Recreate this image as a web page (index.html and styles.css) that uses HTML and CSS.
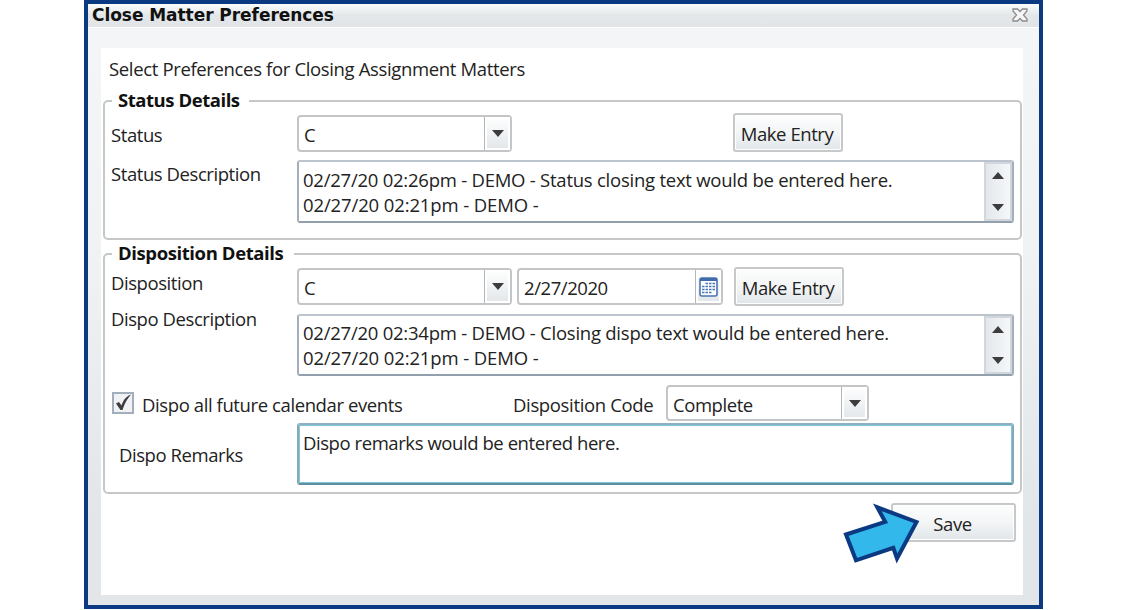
FILE: index.html
```html
<!DOCTYPE html>
<html lang="en">
<head>
	<meta charset="UTF-8">
	<title>Close Matter Preferences</title>
	<link rel="stylesheet" href="styles.css">
</head>
<body>
	<div class="window">
		<div class="title-bar">
			<h1>Close Matter Preferences</h1>
			<svg class="close" width="16" height="14" viewBox="0 0 16 14">
				<path d="M1 1h4.500l2.500 2.500 2.500-2.500H15v2l-3.500 4 3.500 4v2h-4.500l-2.500-2.500-2.500 2.500H1v-2l3.500-4L1 3z" fill="#f6f6f6" stroke="#8c8c8c" stroke-width="1.300"/>
			</svg>
		</div>
		<div class="panel">
			<p class="intro">Select Preferences for Closing Assignment Matters</p>

			<fieldset class="group status">
				<legend>Status Details</legend>
				<div class="row">
					<span class="label">Status</span>
					<div class="combo"><span class="value">C</span><span class="drop"><i class="down"></i></span></div>
					<button class="btn entry">Make Entry</button>
				</div>
				<div class="row">
					<span class="label desc">Status Description</span>
					<div class="memo">
						<p class="lines"><span class="entry-line">02/27/20 02:26pm - DEMO - Status closing text would be entered here.</span><br><span class="entry-line short">02/27/20 02:21pm - DEMO -</span></p>
						<div class="scroll"><i class="up"></i><i class="down"></i></div>
					</div>
				</div>
			</fieldset>

			<fieldset class="group dispo">
				<legend>Disposition Details</legend>
				<div class="row">
					<span class="label">Disposition</span>
					<div class="combo"><span class="value">C</span><span class="drop"><i class="down"></i></span></div>
					<div class="combo date">
						<span class="value">2/27/2020</span>
						<span class="drop">
							<svg width="19" height="20" viewBox="0 0 19 20">
								<rect x="1" y="1" width="17" height="18" rx="2" fill="#fff" stroke="#4a76b2" stroke-width="1.600"/>
								<path d="M1 2.500h17" stroke="#3f6cab" stroke-width="3"/>
								<path d="M6.500 6.500h9.500M3 9.500h13M3 12.500h13M3 15.500h9.500" stroke="#4a76b2" stroke-width="1.600" stroke-dasharray="2.500 1"/>
							</svg>
						</span>
					</div>
					<button class="btn entry">Make Entry</button>
				</div>
				<div class="row">
					<span class="label desc">Dispo Description</span>
					<div class="memo">
						<p class="lines"><span class="entry-line">02/27/20 02:34pm - DEMO - Closing dispo text would be entered here.</span><br><span class="entry-line short">02/27/20 02:21pm - DEMO -</span></p>
						<div class="scroll"><i class="up"></i><i class="down"></i></div>
					</div>
				</div>
				<div class="row options">
					<span class="check">
						<svg width="18" height="18" viewBox="0 0 18 18">
							<path d="M2 9.500l3-1.500 2.500 3.500C9 7 11.500 2.500 17 .5 13 5 10.500 9.500 8.500 16H6.500z" fill="#3c3c3c"/>
						</svg>
					</span>
					<span class="check-text">Dispo all future calendar events</span>
					<span class="code-text">Disposition Code</span>
					<div class="combo code"><span class="value">Complete</span><span class="drop"><i class="down"></i></span></div>
				</div>
				<div class="row">
					<span class="label remarks">Dispo Remarks</span>
					<div class="memo focused">
						<p class="lines">Dispo remarks would be entered here.</p>
					</div>
				</div>
			</fieldset>

			<div class="actions">
				<button class="btn save">Save</button>
			</div>
		</div>
		<svg class="arrow" width="80" height="64" viewBox="0 0 80 64">
			<path d="M6 34.500L45.200 21.800 37.300 7.300 76.500 22 57 58.500 53.300 47.800 16 60.300z" fill="#33b8ec" stroke="#0c3a82" stroke-width="4"/>
		</svg>
	</div>
</body>
</html>
```
FILE: styles.css
```css
*{
	box-sizing: border-box;
}
body{
	margin: 0;
	background-color: #fff;
	color: #222;
	font-family: "Open Sans", "Noto Sans", sans-serif;
	font-size: 18.5px;
	letter-spacing: -.43px;
	line-height: 24px;
}
p, h1{
	margin: 0;
}
.window{
	position: relative;
	width: 959px;
	height: 609px;
	margin-left: 84px;
	border: 4px solid #0c3a82;
	background: linear-gradient(#f5f6f8, #eff1f2 45%, #e2e6e9 85%);
}
.title-bar{
	display: flex;
	justify-content: space-between;
	height: 24px;
	padding: 0 11px 0 4px;
	border-bottom: 1px solid #fff;
	background: linear-gradient(#fbfcfc, #e3e7e9 50%, #e1e5e8);
}
h1{
	font: bold 17px/22px "DejaVu Sans", sans-serif;
	letter-spacing: -.05px;
	color: #111;
}
.close{
	margin-top: 4px;
}
.panel{
	width: 922px;
	height: 547px;
	margin: 20px 0 0 13px;
	padding: 9px 1px 0 2px;
	background-color: #fff;
}
.intro{
	padding-left: 6px;
	height: 32px;
	letter-spacing: -.35px;
}
.group{
	min-width: 0;
	margin: 0;
	padding: 0 6px;
	border: 2px solid #c6c7c8;
	border-radius: 5px;
}
.status{
	height: 151px;
}
.dispo{
	height: 252px;
	margin-top: 2px;
}
legend{
	height: 24px;
	margin-left: 1px;
	padding: 0 9px 0 6px;
	font-weight: bold;
	letter-spacing: -.45px;
	line-height: 22px;
	color: #111;
}
.dispo legend{
	padding-right: 11px;
	letter-spacing: -.4px;
}
.row{
	display: flex;
	margin-bottom: 7px;
	height: 40px;
	white-space: nowrap;
}
.row + .row{
	height: 63px;
}
.label{
	width: 186px;
	padding-top: 10px;
}
.dispo .label{
	padding-top: 5px;
}
.label.desc{
	padding-top: 2px;
}
.dispo .label.desc{
	margin-top: -7px;
	padding-top: 0;
}
.dispo .label.remarks{
	padding: 20px 0 0 8px;
}
.combo{
	display: flex;
	width: 215px;
	height: 37px;
	margin-top: 2px;
	border: 2px solid #c3c5c6;
	border-radius: 4px;
	background-color: #fff;
}
.value{
	flex: 1;
	padding: 6px 0 0 5px;
}
.drop{
	display: flex;
	align-items: center;
	justify-content: center;
	width: 26px;
	border-left: 1px solid #b4b6b9;
	box-shadow: inset 0 0 0 2px #fff;
	background: linear-gradient(#fff, #e1e6e9);
}
.up, .down{
	width: 0;
	border: 6px solid transparent;
}
.down{
	border-top: 7px solid #3c3c3c;
	border-bottom: 0;
}
.up{
	border-bottom: 7px solid #3c3c3c;
	border-top: 0;
}
.date{
	width: 206px;
	margin-left: 5px;
}
.btn{
	width: 110px;
	height: 39px;
	padding: 3px 2px 0 0;
	border: 2px solid #c6c8ca;
	border-radius: 3px;
	box-shadow: inset 0 0 0 1px #fff;
	background: linear-gradient(#fdfdfd, #f3f5f6 50%, #e1e6e9);
	color: #222;
	font: inherit;
	letter-spacing: inherit;
}
.status .entry{
	margin-left: 221px;
}
.dispo .entry{
	margin: 1px 0 0 11px;
}
.memo{
	display: flex;
	justify-content: space-between;
	width: 717px;
	height: 63px;
	border: 2px solid #a3afba;
	border-top-color: #bcc5cd;
	border-bottom-color: #92a0ad;
	border-radius: 3px;
}
.lines{
	padding: 5px 0 0 4px;
	line-height: 25px;
}
.dispo .lines{
	padding-top: 4px;
}
.entry-line{
	letter-spacing: -.24px;
}
.entry-line.short{
	letter-spacing: -.12px;
}
.scroll{
	display: flex;
	flex-direction: column;
	justify-content: space-between;
	align-items: center;
	width: 28px;
	padding: 8px 0;
	border: 2px solid #d0d6dc;
	background: linear-gradient(90deg, #e3e8ec, #f5f7f9);
}
.dispo .row{
	margin-bottom: 8px;
}
.dispo .row + .row{
	height: 62px;
}
.dispo .memo{
	height: 62px;
}
.dispo .row.options{
	height: 39px;
	margin-bottom: 0;
}
.check{
	width: 22px;
	height: 22px;
	margin: 8px 8px 0 1px;
	border: 2px solid #a3aebc;
	background-color: #f1f2f3;
}
.check svg{
	display: block;
}
.check-text{
	width: 371px;
	padding-top: 9px;
	letter-spacing: -.4px;
}
.code-text{
	width: 153px;
	padding-top: 9px;
	letter-spacing: -.35px;
}
.code{
	width: 203px;
	height: 36px;
	margin-top: 1px;
}
.dispo .focused{
	border-color: #8fb0c0 #86a9b9 #5f8ea3;
	box-shadow: inset 0 0 0 1px #7fc6da;
}
.focused .lines{
	padding-top: 5px;
}
.actions{
	display: flex;
	justify-content: flex-end;
	padding: 9px 6px 0;
}
.save{
	width: 125px;
}
.arrow{
	position: absolute;
	left: 752px;
	top: 496px;
}
```
